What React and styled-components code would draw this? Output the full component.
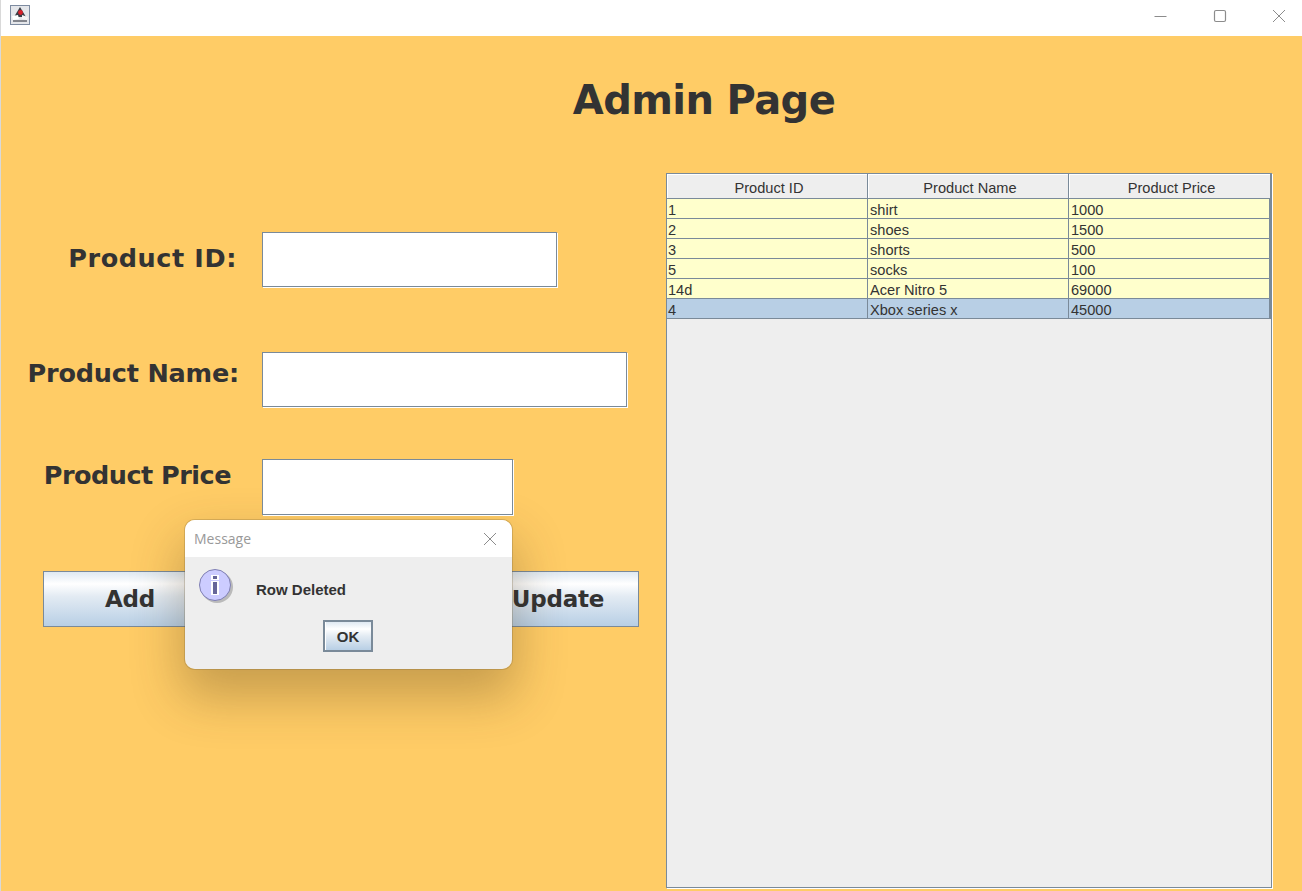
import React from "react";
import styled, { createGlobalStyle } from "styled-components";

const Global = createGlobalStyle`
  html, body { margin: 0; padding: 0; background: #ffcc66; }
  * { box-sizing: border-box; }
`;

const Page = styled.div`
  position: relative;
  width: 1302px;
  height: 891px;
  overflow: hidden;
  background: #ffcc66;
  border-left: 1px solid #d9d9d9;
  font-family: "DejaVu Sans", Verdana, sans-serif;
  color: #333333;
`;

const TitleBar = styled.div`
  height: 36px;
  background: #ffffff;
  display: flex;
  align-items: center;
  padding-left: 9px;
`;

const AppIcon = styled.svg`
  width: 20px;
  height: 20px;
  margin-top: -6px;
  flex: none;
`;

const WindowButtons = styled.div`
  margin-left: auto;
  margin-right: -6px;
  display: flex;
  align-items: center;
  margin-top: -5px;
`;

const WindowButton = styled.svg`
  width: 59px;
  height: 14px;
  fill: none;
  stroke: #8c8c8c;
  stroke-width: 1;
`;

const Header = styled.div`
  height: 137px;
  padding: 39px 0 0 105px;
  display: flex;
  justify-content: center;
`;

const Title = styled.h1`
  margin: 0;
  font-size: 40px;
  line-height: 50px;
  font-weight: 700;
  letter-spacing: -0.6px;
`;

const Columns = styled.div`
  display: grid;
  grid-template-columns: 665px 606px;
`;

const Form = styled.div`
  padding-top: 59px;
  display: flex;
  flex-direction: column;
`;

const Row = styled.div`
  display: flex;
  align-items: flex-start;
  margin-top: ${(p) => p.$gap}px;
`;

const Label = styled.label`
  width: 261px;
  flex: none;
  text-align: right;
  font-size: 25.5px;
  line-height: 32px;
  font-weight: 700;
  letter-spacing: ${(p) => p.$track}px;
  padding-right: ${(p) => p.$inset}px;
  padding-top: ${(p) => p.$drop}px;
`;

const Field = styled.input`
  display: block;
  position: relative;
  z-index: 1;
  width: ${(p) => p.$width}px;
  height: ${(p) => p.$height}px;
  background: #ffffff;
  border: 1px solid #7a8a99;
  border-radius: 0;
  outline: none;
  box-shadow: 1px 1px 0 #ffffff;
`;

const Buttons = styled.div`
  display: flex;
  justify-content: space-between;
  margin: 56px 27px 0 42px;
`;

const ActionButton = styled.button`
  height: 56px;
  width: ${(p) => p.$width}px;
  border: 1px solid #7a8a99;
  border-radius: 0;
  background: linear-gradient(#dfe9f2 0%, #ffffff 22%, #e3ebf3 45%, #b8cfe5 100%);
  color: #333333;
  font-family: "DejaVu Sans", Verdana, sans-serif;
  font-size: 23px;
  font-weight: 700;
  letter-spacing: -0.2px;
  padding: 0;
`;

const TablePanel = styled.div`
  height: 715px;
  background: #eeeeee;
  border: 1px solid #7a8a99;
  box-shadow: 1px 1px 0 #ffffff;
  font-family: "Liberation Sans", Arial, sans-serif;
  font-size: 14.6px;
`;

const TableHead = styled.div`
  display: grid;
  grid-template-columns: 201px 201px 202px;
  grid-template-rows: 25px;
`;

const HeadCell = styled.div`
  border-right: 1px solid #7a8a99;
  border-bottom: 1px solid #7a8a99;
  box-shadow: inset 1px 1px 0 #ffffff;
  background: #eeeeee;
  text-align: center;
  line-height: 28px;
  height: 25px;
  padding-left: 4px;
`;

const TableRow = styled.div`
  display: grid;
  grid-template-columns: 201px 201px 200px;
  grid-template-rows: 20px;
  background: ${(p) => (p.$selected ? "#b8cfe5" : "#ffffcc")};
  border-right: 2px solid #7a8a99;
`;

const Cell = styled.div`
  height: 20px;
  border-right: 1px solid #7a8a99;
  border-bottom: 1px solid #7a8a99;
  padding-left: 2px;
  line-height: 22px;
  white-space: nowrap;
  &:first-child { padding-left: 1px; }
  &:last-child { border-right: none; }
`;

const Dialog = styled.div`
  position: absolute;
  z-index: 2;
  left: 184px;
  top: 520px;
  width: 327px;
  height: 149px;
  background: #eeeeee;
  border-radius: 10px;
  overflow: hidden;
  font-family: "Liberation Sans", Arial, sans-serif;
`;

const DialogShadow = styled.div`
  position: absolute;
  left: 184px;
  top: 520px;
  width: 327px;
  height: 149px;
  border-radius: 10px;
  box-shadow: 0 0 0 1px rgba(110, 90, 50, 0.25), 0 24px 50px 4px rgba(70, 50, 20, 0.3);
`;

const DialogHead = styled.div`
  height: 37px;
  background: #ffffff;
  display: flex;
  align-items: center;
  padding: 0 15px 0 9px;
  justify-content: space-between;
`;

const DialogTitle = styled.span`
  font-family: "Open Sans", "Noto Sans", sans-serif;
  font-size: 14px;
  color: #999999;
`;

const DialogBody = styled.div`
  display: flex;
  align-items: flex-start;
  padding: 10px 0 0 12px;
`;

const InfoIcon = styled.svg`
  width: 38px;
  height: 38px;
  flex: none;
`;

const Message = styled.span`
  margin: 14px 0 0 21px;
  font-size: 15px;
  line-height: 18px;
  font-weight: 700;
  color: #333333;
`;

const DialogFoot = styled.div`
  display: flex;
  justify-content: center;
  margin-top: 15px;
  padding-right: 1px;
`;

const OkButton = styled.button`
  width: 50px;
  height: 32px;
  border: 2px solid #7a8a99;
  border-radius: 0;
  box-shadow: inset 1px 0 0 #ffffff;
  background: linear-gradient(#dfe9f2 0%, #ffffff 25%, #e3ebf3 50%, #b8cfe5 100%);
  color: #333333;
  font-family: "Liberation Sans", Arial, sans-serif;
  font-size: 15px;
  font-weight: 700;
  padding: 0;
`;

const CloseGlyph = styled.svg`
  width: 14px;
  height: 14px;
  fill: none;
  stroke: #8c8c8c;
  stroke-width: 1;
`;

const rows = [
  ["1", "shirt", "1000"],
  ["2", "shoes", "1500"],
  ["3", "shorts", "500"],
  ["5", "socks", "100"],
  ["14d", "Acer Nitro 5", "69000"],
  ["4", "Xbox series x", "45000"],
];

export default function App() {
  return (
    <Page>
      <Global />
      <TitleBar>
        <AppIcon viewBox="0 0 20 20">
          <rect x="0.5" y="0.5" width="19" height="19" fill="#e4e6ea" stroke="#7d8ba0" />
          <path d="M10 2 L13 7 L16 12 L4 12 L7 7 Z" fill="#3a3d45" />
          <circle cx="10.5" cy="7.5" r="2.4" fill="#d8202a" />
          <path d="M2 11 L8 10 L9 14 L3 15 Z" fill="#ffffff" />
          <path d="M12 10 L18 12 L17 15 L12 14 Z" fill="#f5f5f5" />
          <rect x="3" y="15" width="14" height="2" fill="#83868d" />
        </AppIcon>
        <WindowButtons>
          <WindowButton viewBox="0 0 59 14">
            <path d="M23.5 7.5 H35.5" />
          </WindowButton>
          <WindowButton viewBox="0 0 59 14">
            <rect x="24.5" y="1.5" width="11" height="11" rx="1.5" strokeWidth="1.2" />
          </WindowButton>
          <WindowButton viewBox="0 0 59 14">
            <path d="M24 1 L36 13 M36 1 L24 13" />
          </WindowButton>
        </WindowButtons>
      </TitleBar>
      <Header>
        <Title>Admin Page</Title>
      </Header>
      <Columns>
        <Form>
          <Row $gap={0}>
            <Label $inset={25} $drop={10} $track={0.6}>Product ID:</Label>
            <Field $width={295} $height={55} />
          </Row>
          <Row $gap={65}>
            <Label $inset={23} $drop={5} $track={-0.2}>Product Name:</Label>
            <Field $width={365} $height={55} />
          </Row>
          <Row $gap={52}>
            <Label $inset={31} $drop={0} $track={-0.5}>Product Price</Label>
            <Field $width={251} $height={56} />
          </Row>
          <Buttons>
            <ActionButton $width={174}>Add</ActionButton>
            <ActionButton $width={162}>Update</ActionButton>
          </Buttons>
        </Form>
        <TablePanel>
          <TableHead>
            <HeadCell>Product ID</HeadCell>
            <HeadCell>Product Name</HeadCell>
            <HeadCell>Product Price</HeadCell>
          </TableHead>
          {rows.map((r, i) => (
            <TableRow key={r[0]} $selected={i === rows.length - 1}>
              <Cell>{r[0]}</Cell>
              <Cell>{r[1]}</Cell>
              <Cell>{r[2]}</Cell>
            </TableRow>
          ))}
        </TablePanel>
      </Columns>
      <DialogShadow />
      <Dialog>
        <DialogHead>
          <DialogTitle>Message</DialogTitle>
          <CloseGlyph viewBox="0 0 14 14">
            <path d="M1 1 L13 13 M13 1 L1 13" />
          </CloseGlyph>
        </DialogHead>
        <DialogBody>
          <InfoIcon viewBox="0 0 38 38">
            <circle cx="20" cy="20" r="16" fill="#8f8f8f" opacity="0.55" />
            <circle cx="18" cy="18" r="15.5" fill="#ccccff" stroke="#7f7fb2" />
            <rect x="14" y="8" width="8" height="5" fill="#ffffff" />
            <rect x="16" y="9" width="4" height="3" fill="#666699" />
            <rect x="14" y="14" width="8" height="14" fill="#ffffff" />
            <rect x="16" y="15" width="4" height="12" fill="#666699" />
          </InfoIcon>
          <Message>Row Deleted</Message>
        </DialogBody>
        <DialogFoot>
          <OkButton>OK</OkButton>
        </DialogFoot>
      </Dialog>
    </Page>
  );
}
